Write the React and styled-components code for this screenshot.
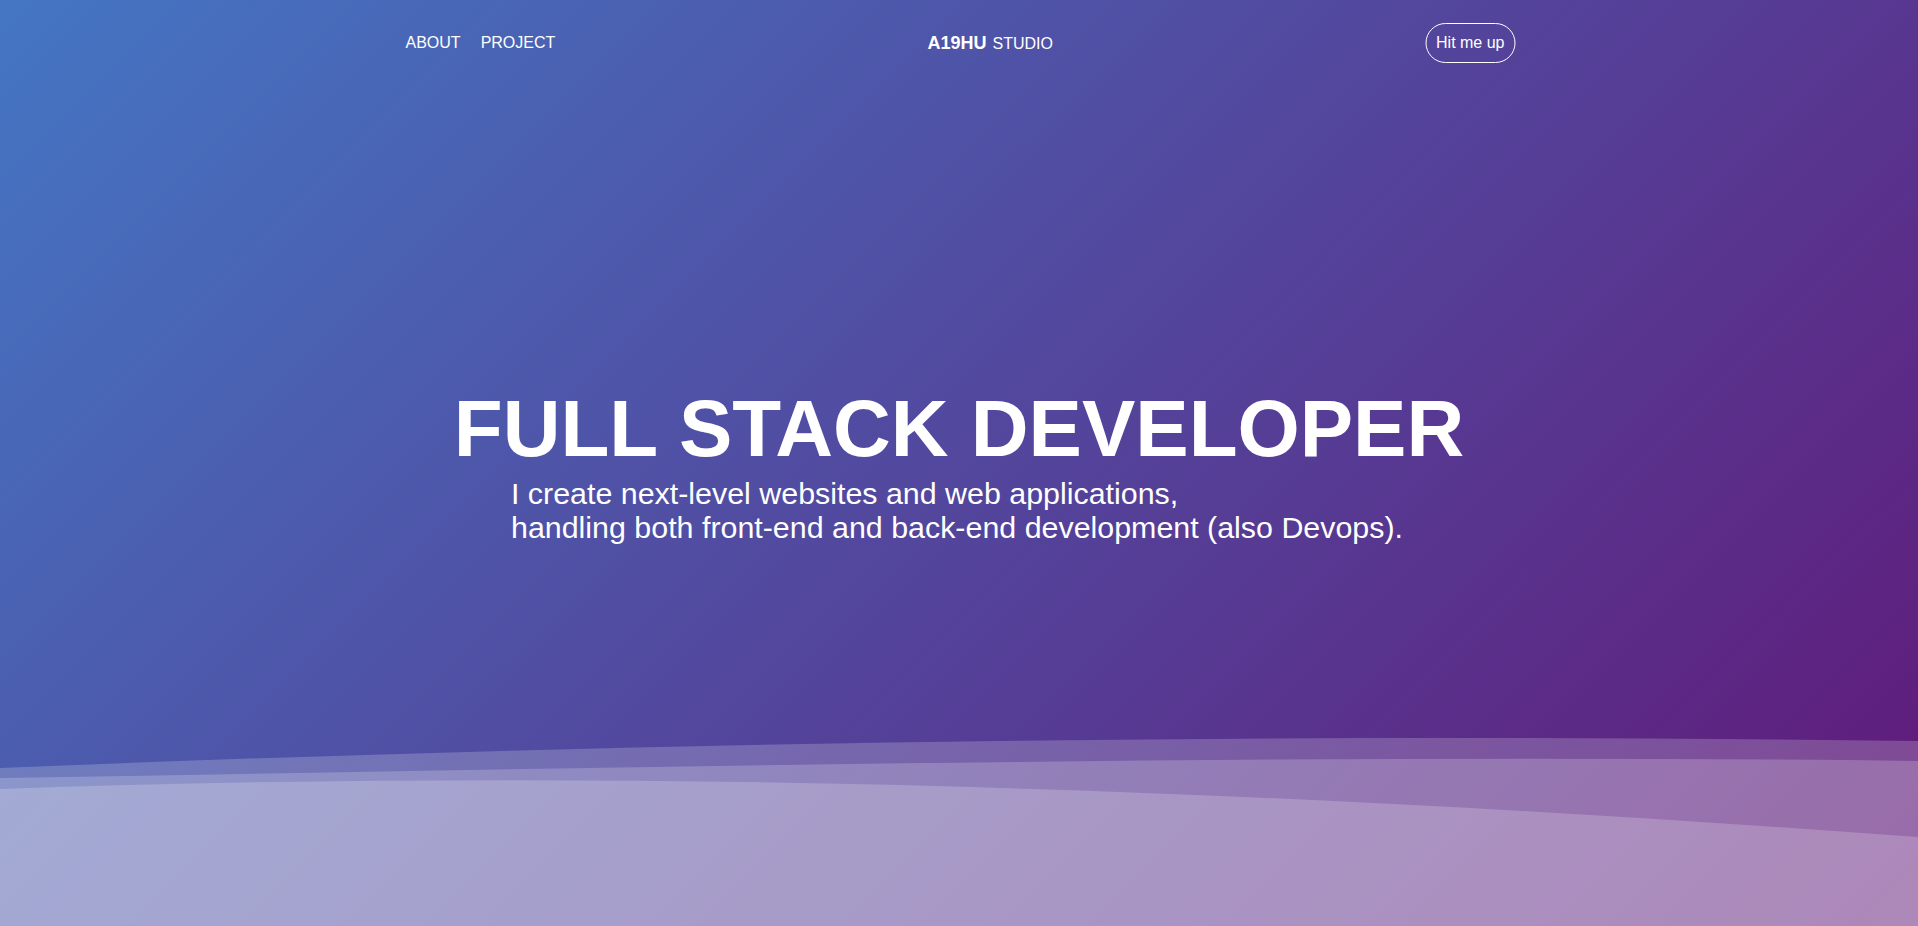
import React from "react";
import styled, { createGlobalStyle } from "styled-components";

const GlobalStyle = createGlobalStyle`
  html, body {
    margin: 0;
    padding: 0;
  }
  * {
    box-sizing: border-box;
  }
  body {
    font-family: "Liberation Sans", Arial, Helvetica, sans-serif;
    color: #ffffff;
    background: #aa9ec8;
  }
  ::-webkit-scrollbar {
    width: 2px;
  }
  ::-webkit-scrollbar-track {
    background: #808080;
  }
  ::-webkit-scrollbar-thumb {
    background: #000000;
  }
`;

const Hero = styled.section`
  position: relative;
  height: 100vh;
  overflow: hidden;
  background: linear-gradient(135deg, #4476c3 0%, #611878 100%);
  display: flex;
  align-items: center;
  justify-content: center;
`;

const Header = styled.header`
  position: absolute;
  top: 0;
  left: 0;
  right: 0;
  z-index: 3;
  padding: 23px 0;
`;

const Nav = styled.nav`
  max-width: 1110px;
  margin: 0 auto;
  display: flex;
  align-items: center;
  justify-content: space-between;
  transform: translateX(1.5px);
`;

const LinkGroup = styled.div`
  display: flex;
  align-items: center;
  gap: 20px;
`;

const NavLink = styled.a`
  color: #ffffff;
  text-decoration: none;
  font-size: 16px;
  line-height: 18px;
`;

const Logo = styled.a`
  color: #ffffff;
  text-decoration: none;
  display: flex;
  align-items: baseline;
  gap: 6px;
  font-size: 16px;
  line-height: 20px;
`;

const LogoMark = styled.span`
  font-size: 18px;
  font-weight: 700;
`;

const ContactButton = styled.button`
  font-family: inherit;
  font-size: 16px;
  line-height: 18px;
  color: #ffffff;
  background: transparent;
  border: 1px solid #ffffff;
  border-radius: 20px;
  padding: 10px 10px;
  cursor: pointer;
`;

const Waves = styled.svg`
  position: absolute;
  left: 0;
  bottom: 0;
  width: 100%;
  height: 226px;
  z-index: 1;
  display: block;
`;

const Content = styled.div`
  position: relative;
  z-index: 2;
  text-align: center;
  padding-top: 6px;
`;

const Title = styled.h1`
  margin: 0;
  font-size: 80px;
  line-height: 1;
  font-weight: 700;
  color: #ffffff;
  white-space: nowrap;
`;

const Subtitle = styled.p`
  width: fit-content;
  margin: 7px auto 0;
  text-align: left;
  font-size: 30.4px;
  line-height: 34px;
  font-weight: 400;
  color: #ffffff;
  white-space: nowrap;
  transform: translateX(-2px);
`;

const Section = styled.section`
  height: ${(p) => p.$h}px;
  background: ${(p) => p.$bg};
`;

const wavePaths = [
  "M0,68 C638.7,41.6 1277.3,32.6 1916,41 L1916,226 L0,226 Z",
  "M0,78 C640,67.5 1280,53 1916,61 L1916,226 L0,226 Z",
  "M0,89 C640,66 1280,90 1916,137 L1916,226 L0,226 Z",
];

export default function App() {
  return (
    <>
      <GlobalStyle />
      <Hero>
        <Header>
          <Nav>
            <LinkGroup>
              <NavLink href="#about">ABOUT</NavLink>
              <NavLink href="#project">PROJECT</NavLink>
            </LinkGroup>
            <Logo href="#">
              <LogoMark>A19HU</LogoMark>
              <span>STUDIO</span>
            </Logo>
            <ContactButton type="button">Hit me up</ContactButton>
          </Nav>
        </Header>

        <Waves viewBox="0 0 1916 226" preserveAspectRatio="none" aria-hidden="true">
          {wavePaths.map((d, i) => (
            <path key={i} d={d} fill="#ffffff" fillOpacity="0.2" />
          ))}
        </Waves>

        <Content>
          <Title>FULL STACK DEVELOPER</Title>
          <Subtitle>
            I create next-level websites and web applications,
            <br />
            handling both front-end and back-end development (also Devops).
          </Subtitle>
        </Content>
      </Hero>
      <Section id="about" $h={1420} $bg="linear-gradient(135deg, #a8abd2 0%, #ad8dbb 100%)" />
      <Section id="project" $h={1415} $bg="linear-gradient(135deg, #ad8dbb 0%, #a8abd2 100%)" />
    </>
  );
}
